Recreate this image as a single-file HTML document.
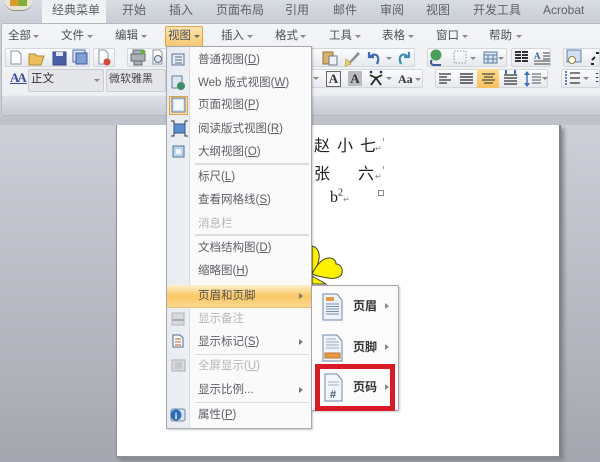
<!DOCTYPE html>
<html><head><meta charset="utf-8"><style>
html,body{margin:0;padding:0;background:#b8bbc3}
body{width:600px;height:462px;overflow:hidden;position:relative;font-family:"Liberation Sans","Noto Sans CJK SC",sans-serif;font-size:11.5px;color:#4b4f57}
#w{position:absolute;left:0;top:0;width:600px;height:462px;overflow:hidden;background:linear-gradient(#cdd0d8 125px,#a4a7af 462px);filter:blur(.35px)}
.a{position:absolute;white-space:nowrap}
.t{position:absolute;white-space:nowrap;line-height:16px;height:16px}
.m{position:absolute;left:198px;white-space:nowrap;line-height:16px;color:#5c5f66;font-size:11.5px}
.d{color:#b4b6ba}
.s{position:absolute;left:195px;width:114px;height:2px;background:#dcdde0}
.ar{position:absolute;width:0;height:0;border-left:4px solid #777;border-top:3px solid transparent;border-bottom:3px solid transparent}
.dn{position:absolute;width:0;height:0;border-top:3px solid #888;border-left:3px solid transparent;border-right:3px solid transparent}
.g{position:absolute;background:linear-gradient(#fbfcfd,#e6e9ee);border:1px solid #d3d6dc;border-radius:2px;box-sizing:border-box}
.tb{position:absolute;top:2px;white-space:nowrap;line-height:16px;color:#5d6068;font-size:12px}
.doc{position:absolute;color:#222;font-size:16px;line-height:20px}
svg{position:absolute;overflow:visible}
</style></head><body><div id="w">
<div class="a" style="left:0;top:0;width:600px;height:22px;background:linear-gradient(#d8dce3,#c9cdd5)"></div>
<div class="a" style="left:42px;top:0;width:64px;height:23px;background:linear-gradient(#eef0f3,#f3f5f7)"></div>
<div class="a" style="left:4px;top:0;width:29px;height:10px;background:#e9e4d6;border-radius:0 0 15px 15px;border-bottom:1px solid #8c8a80"></div>
<div class="a" style="left:10px;top:0;width:17px;height:6px;background:linear-gradient(90deg,#d99a2b 50%,#7fae3a 50%)"></div>
<div class="tb" style="left:52px">经典菜单</div>
<div class="tb" style="left:122px">开始</div>
<div class="tb" style="left:169px">插入</div>
<div class="tb" style="left:216px">页面布局</div>
<div class="tb" style="left:285px">引用</div>
<div class="tb" style="left:333px">邮件</div>
<div class="tb" style="left:380px">审阅</div>
<div class="tb" style="left:426px">视图</div>
<div class="tb" style="left:473px">开发工具</div>
<div class="tb" style="left:543px">Acrobat</div>
<div class="a" style="left:1px;top:23px;width:599px;height:93px;box-sizing:border-box;border:1px solid #b3b6bc;border-right:0;border-radius:3px 0 0 3px;background:linear-gradient(#f2f4f6 0,#eef0f3 78%,#dcdfe6 80%,#c8cbd3 100%)"></div>
<div class="a" style="left:0;top:116px;width:600px;height:9px;background:#c0c3ca"></div>

<div class="t" style="left:8px;top:28px">全部</div><div class="dn" style="left:33px;top:35px"></div>
<div class="t" style="left:61px;top:28px">文件</div><div class="dn" style="left:87px;top:35px"></div>
<div class="t" style="left:115px;top:28px">编辑</div><div class="dn" style="left:141px;top:35px"></div>
<div class="a" style="left:165px;top:26px;width:38px;height:21px;box-sizing:border-box;border:1px solid #dca552;border-radius:2px;background:linear-gradient(#fbe3ad,#f7c873)"></div>
<div class="t" style="left:168px;top:28px">视图</div><div class="dn" style="left:194px;top:35px;border-top-color:#666"></div>
<div class="t" style="left:221px;top:28px">插入</div><div class="dn" style="left:247px;top:35px"></div>
<div class="t" style="left:275px;top:28px">格式</div><div class="dn" style="left:300px;top:35px"></div>
<div class="t" style="left:329px;top:28px">工具</div><div class="dn" style="left:355px;top:35px"></div>
<div class="t" style="left:382px;top:28px">表格</div><div class="dn" style="left:408px;top:35px"></div>
<div class="t" style="left:436px;top:28px">窗口</div><div class="dn" style="left:462px;top:35px"></div>
<div class="t" style="left:489px;top:28px">帮助</div><div class="dn" style="left:516px;top:35px"></div>

<!-- toolbar row 1 -->
<div class="g" style="left:5px;top:48px;width:85px;height:19px"></div>
<div class="g" style="left:93px;top:48px;width:22px;height:19px"></div>
<div class="g" style="left:127px;top:48px;width:40px;height:19px"></div>
<svg style="left:0;top:0" width="600" height="125">
<path d="M11 51h7l3 3v10H11z" fill="#fff" stroke="#8a93a3"/>
<path d="M29 54h6l2 2h7l-3 9H29z" fill="#eec05c" stroke="#b08a3a"/>
<rect x="53" y="52" width="13" height="13" fill="#4b5ea8" stroke="#39477f"/><rect x="56" y="52" width="7" height="4" fill="#dfe4f4"/>
<rect x="73" y="50" width="12" height="12" fill="#dbe5f5" stroke="#4d6ca8"/><rect x="76" y="53" width="11" height="11" fill="#7d9fd4" stroke="#3b5a98"/>
<path d="M99 50h6l3 3v11H99z" fill="#fff" stroke="#8a93a3"/><circle cx="107" cy="62" r="3.5" fill="#d4493c"/>
<path d="M133 54v-4h9v4M131 54h14v7h-14zM134 61h8v4h-8z" fill="#aab0b8" stroke="#666c75"/><circle cx="143" cy="52" r="2.5" fill="#6cae46"/>
<path d="M153 50h7l2 2v12h-9z" fill="#fff" stroke="#8a93a3"/><circle cx="158" cy="59" r="3.5" fill="#dbe8f5" stroke="#667"/>
</svg>

<!-- toolbar row 1 right -->
<div class="g" style="left:311px;top:48px;width:104px;height:19px"></div>
<div class="g" style="left:427px;top:48px;width:80px;height:19px"></div>
<div class="g" style="left:511px;top:48px;width:40px;height:19px"></div>
<div class="g" style="left:563px;top:48px;width:37px;height:19px"></div>
<svg style="left:0;top:0" width="600" height="125">
<rect x="323" y="52" width="10" height="12" fill="#d9b36a" stroke="#8f7138"/><rect x="329" y="56" width="8" height="9" fill="#eef1f6" stroke="#6e7a8c"/>
<path d="M349 62l9-10 2 2-9 9z" fill="#8d8d8d"/><path d="M346 59l5 5-6 2z" fill="#ecd16a" stroke="#b69a36" stroke-width=".6"/>
<path d="M369 52v5h5M370 57c4-5 11-2 7 7" fill="none" stroke="#3e67b4" stroke-width="2.2"/>
<path d="M409 52v5h-5M408 57c-4-5-11-2-7 7" fill="none" stroke="#3e8fb4" stroke-width="2.2"/>
<circle cx="436" cy="55" r="5.500" fill="#4a9e5a"/><path d="M432 60c-2 2-1 5 2 5h7" fill="none" stroke="#3d5d9c" stroke-width="2"/>
<rect x="454" y="51" width="12" height="12" fill="none" stroke="#999" stroke-dasharray="1.5 1.5"/>
<rect x="484" y="52" width="13" height="11" fill="#dbe6f3" stroke="#5d7ba5"/><path d="M484 55h13M488 55v8M493 55v8M484 59h13" stroke="#5d7ba5"/>
<path d="M515 52h6M515 55h6M515 58h6M515 61h6M522 52h6M522 55h6M522 58h6M522 61h6" stroke="#333" stroke-width="2"/>
<path d="M534 61h16M534 64h16M543 53h7M543 56h7M543 59h7" stroke="#444"/>
<text x="534" y="59" font-size="9" font-family="Liberation Serif" fill="#335ea8" font-weight="bold">A</text>
<rect x="567" y="50" width="14" height="12" fill="#cfe0f2" stroke="#5c7ea8"/><circle cx="572" cy="60" r="3.500" fill="#fff" stroke="#997f35"/>
<path d="M592 60l3-3M596 53h3M594 64h-3" stroke="#222" stroke-width="2"/>
</svg>
<div class="dn" style="left:386px;top:57px"></div>
<div class="dn" style="left:470px;top:57px"></div>
<div class="dn" style="left:498px;top:57px"></div>

<!-- toolbar row 2 -->
<div class="a" style="left:10px;top:70px;color:#3c4a9a;font:bold 13px 'Liberation Serif',serif;text-decoration:underline">A<span style="margin-left:-2px">A</span></div>
<div class="a" style="left:28px;top:69px;width:76px;height:23px;box-sizing:border-box;border:1px solid #c9ccd2;border-radius:2px;background:#e4e6ea"></div>
<div class="t" style="left:31px;top:71px;color:#333;font-size:11.5px">正文</div><div class="dn" style="left:94px;top:79px"></div>
<div class="a" style="left:106px;top:69px;width:60px;height:23px;box-sizing:border-box;border:1px solid #c9ccd2;border-radius:2px;background:#e4e6ea"></div>
<div class="t" style="left:109px;top:71px;color:#444;font-size:11px">微软雅黑</div>
<div class="g" style="left:311px;top:69px;width:112px;height:19px"></div>
<div class="dn" style="left:313px;top:77px"></div>
<div class="a" style="left:326px;top:71px;width:13px;height:14px;border:1px solid #666;background:#f4f4f4;font:bold 13px/14px 'Liberation Serif',serif;text-align:center;color:#333">A</div>
<div class="a" style="left:348px;top:71px;width:14px;height:15px;background:#b9bbbe;font:bold 13px/15px 'Liberation Serif',serif;text-align:center;color:#333">A</div>
<svg style="left:0;top:0" width="600" height="125">
<path d="M370 75l6 3 6-3M371 85l5-7 5 7" fill="none" stroke="#222" stroke-width="1.8"/><circle cx="371" cy="72" r="1.300" fill="#225"/><circle cx="381" cy="72" r="1.300" fill="#225"/>
</svg>
<div class="dn" style="left:386px;top:77px"></div>
<div class="a" style="left:398px;top:71px;font:bold 12px/16px 'Liberation Serif',serif;color:#333">Aa</div><div class="dn" style="left:415px;top:78px"></div>
<div class="g" style="left:435px;top:69px;width:113px;height:19px"></div>
<div class="a" style="left:477px;top:69px;width:22px;height:19px;background:linear-gradient(#fdd98e,#f9bf5f)"></div>
<svg style="left:0;top:0" width="600" height="125">
<path d="M439 74h12M439 77h8M439 80h12M439 83h8" stroke="#555" stroke-width="1.4"/>
<path d="M460 74h13M460 77h13M460 80h13M460 83h13" stroke="#444" stroke-width="1.4"/>
<path d="M482 74h13M484 77h9M482 80h13M484 83h9" stroke="#664" stroke-width="1.4"/>
<path d="M504 75h13M504 78h13M504 81h13M504 84h13" stroke="#333" stroke-width="1.300"/><path d="M506 70v4M515 70v4" stroke="#3c6fb4" stroke-width="2"/>
<path d="M527 72v14" stroke="#3c6fb4" stroke-width="1.400"/><path d="M524 75l3-4 3 4M524 83l3 4 3-4" fill="#3c6fb4"/>
<path d="M532 74h9M532 77h9M532 80h9M532 83h9" stroke="#555"/>
</svg>
<div class="dn" style="left:542px;top:77px"></div>
<div class="g" style="left:561px;top:69px;width:39px;height:19px"></div>
<svg style="left:0;top:0" width="600" height="125">
<path d="M570 73h10M570 78h10M570 83h10" stroke="#333" stroke-width="1.200"/><path d="M566 71v15" stroke="#5a7fc0" stroke-width="2" stroke-dasharray="2 1"/>
<path d="M597 73v1M597 77v1M597 81v1" stroke="#345" stroke-width="2.500"/>
</svg>
<div class="dn" style="left:583px;top:77px"></div>

<!-- document -->
<div class="a" style="left:116px;top:125px;width:442px;height:331px;background:#fff;border-left:1px solid #8e9095;border-bottom:2px solid #8d8f95;border-right:2px solid #7f8186;box-shadow:3px 3px 4px #85878d"></div>
<div class="doc" style="left:314px;top:137px">赵</div>
<div class="doc" style="left:337px;top:137px">小</div>
<div class="doc" style="left:360px;top:137px">七</div>
<div class="doc" style="left:314px;top:165px">张</div>
<div class="doc" style="left:358px;top:165px">六</div>
<div class="a" style="left:375px;top:144px;font-size:8px;line-height:10px;color:#888">↵</div>
<div class="a" style="left:375px;top:172px;font-size:8px;line-height:10px;color:#888">↵</div>
<div class="a" style="left:383px;top:138px;width:1px;height:3px;background:#999"></div>
<div class="a" style="left:383px;top:166px;width:1px;height:3px;background:#999"></div>
<div class="t" style="left:330px;top:188px;color:#222;font:16px/20px 'Liberation Serif',serif;height:20px">b<sup style="font-size:10px;line-height:0">2</sup><span style="font-size:8px;color:#888">↵</span></div>
<div class="a" style="left:378px;top:190px;width:4px;height:4px;border:1px solid #888"></div>
<svg style="left:0;top:0" width="600" height="462">
<path d="M312 246C317 247 320 252 319 259C318 265 315 270 312 273z" fill="#fff200" stroke="#443" stroke-width="1"/>
<path d="M312 274C316 266 322 258 329 258C334 258 336 261 336 264C340 264 343 268 342 273C341 278 334 279 328 278C322 277 316 276 312 274z" fill="#fff200" stroke="#443" stroke-width="1"/>
<path d="M312 276L326 284H312z" fill="#fff200" stroke="#443" stroke-width="1"/>
</svg>

<!-- menu -->
<div class="a" style="left:166px;top:46px;width:146px;height:383px;box-sizing:border-box;border:1px solid #a6a8ad;background:linear-gradient(90deg,#e8ecf1 0,#eceff3 22px,#d8dbe0 22px,#d8dbe0 23px,#fafafa 23px);box-shadow:1px 1px 2px rgba(0,0,0,.2)"></div>
<div class="a" style="left:169px;top:96px;width:19px;height:19px;box-sizing:border-box;border:1px solid #e0a04a;background:#fde3ab"></div>
<svg style="left:0;top:0" width="320" height="440">
<rect x="172" y="54" width="12" height="11" fill="#e3ebf5" stroke="#5d7696"/><path d="M175 57h7M175 60h7M175 63h7" stroke="#56687f"/>
<rect x="172" y="76" width="10" height="12" fill="#dbe6f3" stroke="#66809f"/><circle cx="181" cy="86" r="4" fill="#3e8f66"/>
<rect x="172" y="98" width="13" height="14" fill="#d5e2f1" stroke="#5b7597"/><rect x="174" y="100" width="9" height="10" fill="#f4f7fb"/>
<rect x="174" y="124" width="11" height="9" fill="#5b8fd0" stroke="#39598a"/><path d="M171 121h3v3M188 121h-3v3M171 136h3v-3M188 136h-3v-3" fill="none" stroke="#333"/>
<rect x="173" y="146" width="11" height="11" fill="#bcd3ec" stroke="#5b7597"/><rect x="176" y="149" width="5" height="5" fill="#eff5fb"/>
<rect x="172" y="313" width="12" height="12" fill="#d7d9dc" stroke="#b5b7ba"/><path d="M172 320h12" stroke="#a9abae" stroke-width="2"/>
<path d="M173 335h7l3 3v9h-10z" fill="#fff" stroke="#4d6b93"/><path d="M175 339h6M175 342h6M175 345h6" stroke="#c2572f"/>
<rect x="172" y="360" width="13" height="11" fill="#d9dadd" stroke="#aeb0b3"/><rect x="175" y="362" width="7" height="7" fill="#c5c7ca"/>
<rect x="171" y="409" width="14" height="12" rx="2" fill="#dbe5f1" stroke="#6d87a8"/><circle cx="176" cy="415" r="5.500" fill="#2d6cb8"/><text x="176" y="419" font-size="9" font-weight="bold" fill="#fff" text-anchor="middle" font-family="Liberation Serif">i</text>
</svg>
<div class="m" style="top:52px">普通视图(<u>D</u>)</div>
<div class="m" style="top:75px">Web 版式视图(<u>W</u>)</div>
<div class="m" style="top:97px">页面视图(<u>P</u>)</div>
<div class="m" style="top:121px">阅读版式视图(<u>R</u>)</div>
<div class="m" style="top:144px">大纲视图(<u>O</u>)</div>
<div class="s" style="top:163px"></div>
<div class="m" style="top:169px">标尺(<u>L</u>)</div>
<div class="m" style="top:192px">查看网格线(<u>S</u>)</div>
<div class="m d" style="top:216px">消息栏</div>
<div class="s" style="top:234px"></div>
<div class="m" style="top:240px">文档结构图(<u>D</u>)</div>
<div class="m" style="top:263px">缩略图(<u>H</u>)</div>
<div class="a" style="left:167px;top:285px;width:144px;height:23px;background:linear-gradient(#fdf0cf,#fbc763 50%,#fbd88f);border-bottom:1px solid #e5c07a;box-sizing:border-box"></div>
<div class="m" style="top:288px;color:#55514a">页眉和页脚</div><div class="ar" style="left:299px;top:293px"></div>
<div class="m d" style="top:311px">显示备注</div>
<div class="m" style="top:334px">显示标记(<u>S</u>)</div><div class="ar" style="left:299px;top:339px"></div>
<div class="s" style="top:354px;height:1px"></div>
<div class="m d" style="top:358px">全屏显示(<u>U</u>)</div>
<div class="m" style="top:382px">显示比例...</div><div class="ar" style="left:299px;top:387px"></div>
<div class="s" style="top:402px;height:1px"></div>
<div class="m" style="top:407px">属性(<u>P</u>)</div>

<!-- submenu -->
<div class="a" style="left:311px;top:285px;width:88px;height:126px;box-sizing:border-box;border:1px solid #a6a8ad;border-radius:2px;background:#fbfbfb;box-shadow:1px 1px 2px rgba(0,0,0,.2)"></div>
<svg style="left:0;top:0" width="400" height="420">
<path d="M323 294h14l5 6v20h-19z" fill="#eef3fa" stroke="#6f89ab"/><rect x="326" y="297" width="8" height="4" fill="#e69a45"/><path d="M326 304h13M326 306.500h13M326 309h13M326 311.500h13M326 314h13" stroke="#7a8fb0"/>
<path d="M323 335h14l5 6v20h-19z" fill="#eef3fa" stroke="#6f89ab"/><path d="M326 339h10M326 342h13M326 345h13M326 348h13" stroke="#9aa9bf"/><rect x="325" y="353" width="15" height="5" fill="#e69a45" stroke="#b97a2d"/>
<path d="M325 374h12l5 6v21h-17z" fill="#f2f5fa" stroke="#6f89ab"/><path d="M328 382h11M328 385h11" stroke="#a3b2c6"/>
<text x="333" y="398" font-size="11" font-weight="bold" fill="#44566f" text-anchor="middle" font-family="Liberation Sans">#</text>
</svg>
<div class="t" style="left:353px;top:298px;color:#333;font-weight:bold;font-size:12px">页眉</div><div class="ar" style="left:385px;top:303px;border-left-color:#888"></div>
<div class="t" style="left:353px;top:339px;color:#333;font-weight:bold;font-size:12px">页脚</div><div class="ar" style="left:385px;top:344px;border-left-color:#888"></div>
<div class="t" style="left:353px;top:379px;color:#333;font-weight:bold;font-size:12px">页码</div><div class="ar" style="left:385px;top:384px;border-left-color:#888"></div>
<div class="a" style="left:315px;top:364px;width:80px;height:47px;box-sizing:border-box;border:5px solid #d91a27"></div>
</div></body></html>
